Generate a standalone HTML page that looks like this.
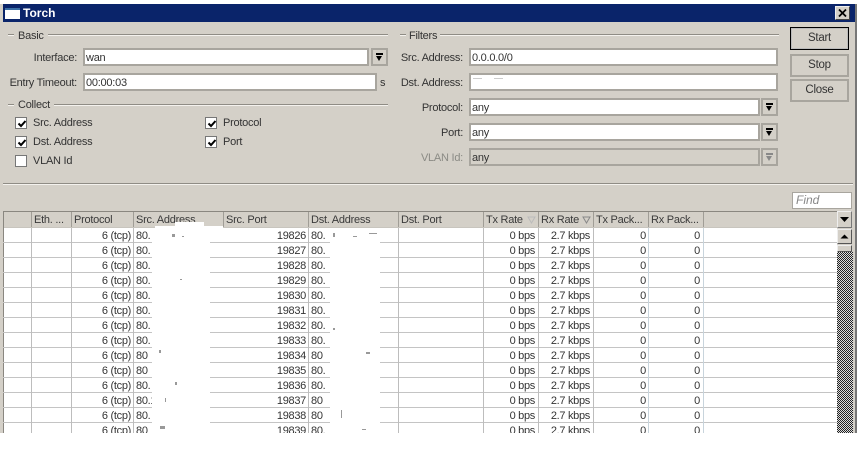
<!DOCTYPE html>
<html><head><meta charset="utf-8"><style>
html,body{margin:0;padding:0;background:#fff}
#w{position:relative;width:857px;height:450px;overflow:hidden;background:#fff;font:11px "Liberation Sans",sans-serif;color:#333;letter-spacing:-.25px}
#w div{position:absolute;box-sizing:border-box}
.t{white-space:nowrap;line-height:16px;height:14px}
.r{text-align:right}
.ln{height:2px;background:linear-gradient(#8f8c85 50%,#f4f2ee 50%)}
.in{background:#fff;border:2px solid #a8a59e;line-height:17px;padding:0 0 0 1px;color:#333;height:18px}
.dd{width:17px;height:18px;background:#d4d0c8;border:2px solid #a8a59e}
.dd i{position:absolute;left:3px;top:3px;width:7px;height:2px;background:#000}
.dd b{position:absolute;left:3px;top:6px;width:0;height:0;border:3.5px solid transparent;border-top:5px solid #000;border-bottom:0}
.cb{width:12px;height:12px;background:#fff;border:1px solid #777}
.cb svg{position:absolute;left:1px;top:1px}
.btn{left:790px;width:59px;height:23px;border:2px solid #a8a59e;background:#d4d0c8;text-align:center;line-height:19px;font-size:11.5px}
.th{top:212px;height:15px;line-height:17px;white-space:nowrap;overflow:hidden;background:#d4d0c8;border-right:1px solid #a09d96;padding-left:2px;color:#3a3a3a}
.v{top:228px;width:1px;height:205px;background:#bdbdbd}
.h{left:3px;width:834px;height:1px;background:#c4c4c4}
.c{white-space:nowrap;line-height:17px;height:15px;color:#333;letter-spacing:-.3px}
.wh{background:#fff}
.m{background:#999}
</style></head><body><div id="w">
<div style="left:0;top:4px;width:857px;height:429px;background:#d4d0c8"></div>
<div style="left:3px;top:4px;width:852px;height:18px;background:#0a246a"></div>
<div style="left:5px;top:8px;width:15px;height:11px;background:#fff;border-top:2px solid #3a6ea5"></div>
<div class="t" style="left:23px;top:5px;color:#fff;font-weight:bold;font-size:12px;letter-spacing:0">Torch</div>
<div style="left:835px;top:6px;width:15px;height:14px;background:#d4d0c8;border:1px solid #eee;border-right-color:#444;border-bottom-color:#444"><svg width="13" height="12" style="position:absolute;left:0;top:0"><path d="M3 2.5L10 9.5M10 2.5L3 9.5" stroke="#000" stroke-width="1.8"/></svg></div>

<div class="ln" style="left:8px;top:34px;width:6px"></div><div class="ln" style="left:48px;top:34px;width:340px"></div>
<div class="t" style="left:18px;top:28px">Basic</div>
<div class="t r" style="left:0;width:77px;top:50px">Interface:</div>
<div class="in" style="left:83px;top:48px;width:286px">wan</div>
<div class="dd" style="left:371px;top:48px"><i></i><b></b></div>
<div class="t r" style="left:0;width:77px;top:75px">Entry Timeout:</div>
<div class="in" style="left:83px;top:73px;width:294px">00:00:03</div>
<div class="t" style="left:380px;top:75px">s</div>
<div class="ln" style="left:8px;top:104px;width:6px"></div><div class="ln" style="left:54px;top:104px;width:334px"></div>
<div class="t" style="left:18px;top:97px">Collect</div>

<div class="cb" style="left:15px;top:117px"><svg width="10" height="10"><path d="M1.5 4.5L4 7L8.5 2" fill="none" stroke="#000" stroke-width="2"/></svg></div>
<div class="t" style="left:33px;top:115px">Src. Address</div>
<div class="cb" style="left:15px;top:136px"><svg width="10" height="10"><path d="M1.5 4.5L4 7L8.5 2" fill="none" stroke="#000" stroke-width="2"/></svg></div>
<div class="t" style="left:33px;top:134px">Dst. Address</div>
<div class="cb" style="left:15px;top:155px"></div>
<div class="t" style="left:33px;top:153px">VLAN Id</div>
<div class="cb" style="left:205px;top:117px"><svg width="10" height="10"><path d="M1.5 4.5L4 7L8.5 2" fill="none" stroke="#000" stroke-width="2"/></svg></div>
<div class="t" style="left:223px;top:115px">Protocol</div>
<div class="cb" style="left:205px;top:136px"><svg width="10" height="10"><path d="M1.5 4.5L4 7L8.5 2" fill="none" stroke="#000" stroke-width="2"/></svg></div>
<div class="t" style="left:223px;top:134px">Port</div>

<div class="ln" style="left:400px;top:34px;width:6px"></div><div class="ln" style="left:440px;top:34px;width:339px"></div>
<div class="t" style="left:409px;top:28px">Filters</div>
<div class="t r" style="left:380px;width:83px;top:50px">Src. Address:</div>
<div class="in" style="left:469px;top:48px;width:309px">0.0.0.0/0</div>
<div class="t r" style="left:380px;width:83px;top:75px">Dst. Address:</div>
<div class="in" style="left:469px;top:73px;width:309px"></div>
<div style="left:473px;top:78px;width:9px;height:1px;background:#ccc"></div><div style="left:494px;top:78px;width:9px;height:1px;background:#ccc"></div>
<div class="t r" style="left:380px;width:83px;top:100px">Protocol:</div>
<div class="in" style="left:469px;top:98px;width:291px">any</div>
<div class="dd" style="left:761px;top:98px"><i></i><b></b></div>
<div class="t r" style="left:380px;width:83px;top:125px">Port:</div>
<div class="in" style="left:469px;top:123px;width:291px">any</div>
<div class="dd" style="left:761px;top:123px"><i></i><b></b></div>
<div class="t r" style="left:380px;width:83px;top:150px;color:#8b8b85">VLAN Id:</div>
<div class="in" style="left:469px;top:148px;width:291px;background:#d4d0c8">any</div>
<div class="dd" style="left:761px;top:148px"><i style="background:#888"></i><b style="border-top-color:#888"></b></div>

<div class="btn" style="top:27px;border:1px solid #000;box-shadow:inset 0 0 0 1px #bbb;line-height:21px">Start</div>
<div class="btn" style="top:54px">Stop</div>
<div class="btn" style="top:79px">Close</div>

<div class="ln" style="left:3px;top:183px;width:850px"></div>
<div class="in" style="left:792px;top:192px;width:60px;height:17px;color:#888;font-style:italic;font-size:12px;padding-left:3px;line-height:15px;letter-spacing:0;border-width:1px;border-color:#a8a59e;background:#fff">Find</div>

<div style="left:3px;top:211px;width:849px;height:17px;background:#d4d0c8;border-top:1px solid #8a8780;border-bottom:1px solid #c8c5be"></div>
<div class="th" style="left:4px;width:28px"></div>
<div class="th" style="left:32px;width:40px">Eth. ...</div>
<div class="th" style="left:72px;width:62px">Protocol</div>
<div class="th" style="left:134px;width:90px">Src. Address</div>
<div class="th" style="left:224px;width:85px">Src. Port</div>
<div class="th" style="left:309px;width:90px">Dst. Address</div>
<div class="th" style="left:399px;width:85px">Dst. Port</div>
<div class="th" style="left:484px;width:55px">Tx Rate</div>
<div class="th" style="left:539px;width:55px">Rx Rate</div>
<div class="th" style="left:594px;width:55px">Tx Pack...</div>
<div class="th" style="left:649px;width:55px">Rx Pack...</div>
<svg width="10" height="8" style="position:absolute;left:582px;top:216px"><path d="M1 1H8L4.5 7Z" fill="none" stroke="#888"/></svg>
<svg width="10" height="8" style="position:absolute;left:527px;top:216px"><path d="M1 1H8L4.5 7Z" fill="none" stroke="#bbb"/></svg>

<div style="left:3px;top:228px;width:834px;height:205px;background:#fff"></div>
<div style="left:3px;top:211px;width:1px;height:222px;background:#8a8780"></div>
<div class="h" style="top:242px"></div><div class="h" style="top:257px"></div><div class="h" style="top:272px"></div><div class="h" style="top:287px"></div><div class="h" style="top:302px"></div><div class="h" style="top:317px"></div><div class="h" style="top:332px"></div><div class="h" style="top:347px"></div><div class="h" style="top:362px"></div><div class="h" style="top:377px"></div><div class="h" style="top:392px"></div><div class="h" style="top:407px"></div><div class="h" style="top:422px"></div>
<div class="v" style="left:31px"></div><div class="v" style="left:71px"></div><div class="v" style="left:133px"></div><div class="v" style="left:308px"></div><div class="v" style="left:398px"></div><div class="v" style="left:483px"></div><div class="v" style="left:538px"></div><div class="v" style="left:593px"></div><div class="v" style="left:648px;background:#c8d4dc"></div><div class="v" style="left:703px;background:#c8d4dc"></div>

<div style="left:0;top:228px;width:835px;height:205px;overflow:hidden;background:none">
<div class="c r" style="left:71px;width:60px;top:0">6 (tcp)</div><div class="c" style="left:136px;top:0">80.</div><div class="c r" style="left:246px;width:60px;top:0">19826</div><div class="c" style="left:311px;top:0">80.</div><div class="c r" style="left:475px;width:60px;top:0">0 bps</div><div class="c r" style="left:530px;width:60px;top:0">2.7 kbps</div><div class="c r" style="left:586px;width:60px;top:0">0</div><div class="c r" style="left:640px;width:60px;top:0">0</div>
<div class="c r" style="left:71px;width:60px;top:15px">6 (tcp)</div><div class="c" style="left:136px;top:15px">80.</div><div class="c r" style="left:246px;width:60px;top:15px">19827</div><div class="c" style="left:311px;top:15px">80.</div><div class="c r" style="left:475px;width:60px;top:15px">0 bps</div><div class="c r" style="left:530px;width:60px;top:15px">2.7 kbps</div><div class="c r" style="left:586px;width:60px;top:15px">0</div><div class="c r" style="left:640px;width:60px;top:15px">0</div>
<div class="c r" style="left:71px;width:60px;top:30px">6 (tcp)</div><div class="c" style="left:136px;top:30px">80.</div><div class="c r" style="left:246px;width:60px;top:30px">19828</div><div class="c" style="left:311px;top:30px">80.</div><div class="c r" style="left:475px;width:60px;top:30px">0 bps</div><div class="c r" style="left:530px;width:60px;top:30px">2.7 kbps</div><div class="c r" style="left:586px;width:60px;top:30px">0</div><div class="c r" style="left:640px;width:60px;top:30px">0</div>
<div class="c r" style="left:71px;width:60px;top:45px">6 (tcp)</div><div class="c" style="left:136px;top:45px">80.</div><div class="c r" style="left:246px;width:60px;top:45px">19829</div><div class="c" style="left:311px;top:45px">80.</div><div class="c r" style="left:475px;width:60px;top:45px">0 bps</div><div class="c r" style="left:530px;width:60px;top:45px">2.7 kbps</div><div class="c r" style="left:586px;width:60px;top:45px">0</div><div class="c r" style="left:640px;width:60px;top:45px">0</div>
<div class="c r" style="left:71px;width:60px;top:60px">6 (tcp)</div><div class="c" style="left:136px;top:60px">80.</div><div class="c r" style="left:246px;width:60px;top:60px">19830</div><div class="c" style="left:311px;top:60px">80.</div><div class="c r" style="left:475px;width:60px;top:60px">0 bps</div><div class="c r" style="left:530px;width:60px;top:60px">2.7 kbps</div><div class="c r" style="left:586px;width:60px;top:60px">0</div><div class="c r" style="left:640px;width:60px;top:60px">0</div>
<div class="c r" style="left:71px;width:60px;top:75px">6 (tcp)</div><div class="c" style="left:136px;top:75px">80.</div><div class="c r" style="left:246px;width:60px;top:75px">19831</div><div class="c" style="left:311px;top:75px">80.</div><div class="c r" style="left:475px;width:60px;top:75px">0 bps</div><div class="c r" style="left:530px;width:60px;top:75px">2.7 kbps</div><div class="c r" style="left:586px;width:60px;top:75px">0</div><div class="c r" style="left:640px;width:60px;top:75px">0</div>
<div class="c r" style="left:71px;width:60px;top:90px">6 (tcp)</div><div class="c" style="left:136px;top:90px">80.</div><div class="c r" style="left:246px;width:60px;top:90px">19832</div><div class="c" style="left:311px;top:90px">80.</div><div class="c r" style="left:475px;width:60px;top:90px">0 bps</div><div class="c r" style="left:530px;width:60px;top:90px">2.7 kbps</div><div class="c r" style="left:586px;width:60px;top:90px">0</div><div class="c r" style="left:640px;width:60px;top:90px">0</div>
<div class="c r" style="left:71px;width:60px;top:105px">6 (tcp)</div><div class="c" style="left:136px;top:105px">80.</div><div class="c r" style="left:246px;width:60px;top:105px">19833</div><div class="c" style="left:311px;top:105px">80.</div><div class="c r" style="left:475px;width:60px;top:105px">0 bps</div><div class="c r" style="left:530px;width:60px;top:105px">2.7 kbps</div><div class="c r" style="left:586px;width:60px;top:105px">0</div><div class="c r" style="left:640px;width:60px;top:105px">0</div>
<div class="c r" style="left:71px;width:60px;top:120px">6 (tcp)</div><div class="c" style="left:136px;top:120px">80</div><div class="c r" style="left:246px;width:60px;top:120px">19834</div><div class="c" style="left:311px;top:120px">80</div><div class="c r" style="left:475px;width:60px;top:120px">0 bps</div><div class="c r" style="left:530px;width:60px;top:120px">2.7 kbps</div><div class="c r" style="left:586px;width:60px;top:120px">0</div><div class="c r" style="left:640px;width:60px;top:120px">0</div>
<div class="c r" style="left:71px;width:60px;top:135px">6 (tcp)</div><div class="c" style="left:136px;top:135px">80</div><div class="c r" style="left:246px;width:60px;top:135px">19835</div><div class="c" style="left:311px;top:135px">80.</div><div class="c r" style="left:475px;width:60px;top:135px">0 bps</div><div class="c r" style="left:530px;width:60px;top:135px">2.7 kbps</div><div class="c r" style="left:586px;width:60px;top:135px">0</div><div class="c r" style="left:640px;width:60px;top:135px">0</div>
<div class="c r" style="left:71px;width:60px;top:150px">6 (tcp)</div><div class="c" style="left:136px;top:150px">80.</div><div class="c r" style="left:246px;width:60px;top:150px">19836</div><div class="c" style="left:311px;top:150px">80.</div><div class="c r" style="left:475px;width:60px;top:150px">0 bps</div><div class="c r" style="left:530px;width:60px;top:150px">2.7 kbps</div><div class="c r" style="left:586px;width:60px;top:150px">0</div><div class="c r" style="left:640px;width:60px;top:150px">0</div>
<div class="c r" style="left:71px;width:60px;top:165px">6 (tcp)</div><div class="c" style="left:136px;top:165px">80.1</div><div class="c r" style="left:246px;width:60px;top:165px">19837</div><div class="c" style="left:311px;top:165px">80</div><div class="c r" style="left:475px;width:60px;top:165px">0 bps</div><div class="c r" style="left:530px;width:60px;top:165px">2.7 kbps</div><div class="c r" style="left:586px;width:60px;top:165px">0</div><div class="c r" style="left:640px;width:60px;top:165px">0</div>
<div class="c r" style="left:71px;width:60px;top:180px">6 (tcp)</div><div class="c" style="left:136px;top:180px">80.</div><div class="c r" style="left:246px;width:60px;top:180px">19838</div><div class="c" style="left:311px;top:180px">80</div><div class="c r" style="left:475px;width:60px;top:180px">0 bps</div><div class="c r" style="left:530px;width:60px;top:180px">2.7 kbps</div><div class="c r" style="left:586px;width:60px;top:180px">0</div><div class="c r" style="left:640px;width:60px;top:180px">0</div>
<div class="c r" style="left:71px;width:60px;top:195px">6 (tcp)</div><div class="c" style="left:136px;top:195px">80</div><div class="c r" style="left:246px;width:60px;top:195px">19839</div><div class="c" style="left:311px;top:195px">80.</div><div class="c r" style="left:475px;width:60px;top:195px">0 bps</div><div class="c r" style="left:530px;width:60px;top:195px">2.7 kbps</div><div class="c r" style="left:586px;width:60px;top:195px">0</div><div class="c r" style="left:640px;width:60px;top:195px">0</div>
</div>

<div class="wh" style="left:175px;top:222px;width:29px;height:6px"></div>
<div class="wh" style="left:155px;top:226px;width:68px;height:2px"></div>
<div class="wh" style="left:152px;top:228px;width:58px;height:205px"></div>
<div class="wh" style="left:330px;top:228px;width:50px;height:205px"></div>
<div class="m" style="left:172px;top:234px;width:3px;height:3px"></div>
<div class="m" style="left:182px;top:236px;width:2px;height:1px"></div>
<div class="m" style="left:180px;top:279px;width:2px;height:1px"></div>
<div class="m" style="left:333px;top:233px;width:2px;height:4px"></div>
<div class="m" style="left:353px;top:236px;width:4px;height:1px"></div>
<div class="m" style="left:369px;top:233px;width:8px;height:1px"></div>
<div class="m" style="left:333px;top:328px;width:2px;height:2px"></div>
<div class="m" style="left:159px;top:350px;width:2px;height:3px"></div>
<div class="m" style="left:366px;top:352px;width:4px;height:2px"></div>
<div class="m" style="left:175px;top:382px;width:2px;height:3px"></div>
<div class="m" style="left:165px;top:398px;width:1px;height:4px"></div>
<div class="m" style="left:341px;top:410px;width:1px;height:8px"></div>
<div class="m" style="left:160px;top:426px;width:5px;height:3px"></div>
<div class="m" style="left:362px;top:429px;width:4px;height:1px"></div>

<div style="left:837px;top:211px;width:15px;height:17px;background:#d4d0c8;border:1px solid #eee;border-right-color:#777;border-bottom-color:#777"><svg width="13" height="15" style="position:absolute;left:0;top:0"><path d="M2 5H11L6.5 10Z" fill="#000"/></svg></div>
<div style="left:837px;top:229px;width:15px;height:15px;background:#d4d0c8;border:1px solid #eee;border-right-color:#555;border-bottom-color:#555"><svg width="13" height="13" style="position:absolute;left:0;top:0"><path d="M2.5 8.5H10.5L6.5 4.5Z" fill="#000"/></svg></div>
<div style="left:837px;top:245px;width:15px;height:7px;background:#d4d0c8;border:1px solid #eee;border-right-color:#555;border-bottom-color:#555"></div>
<div style="left:837px;top:252px;width:16px;height:181px;background:conic-gradient(#222 25%,#ddd 0 50%,#222 0 75%,#ddd 0);background-size:2px 2px"></div>
<div style="left:855px;top:4px;width:2px;height:429px;background:#777"></div>
<div style="left:0;top:433px;width:857px;height:17px;background:#fff"></div>
</div></body></html>
